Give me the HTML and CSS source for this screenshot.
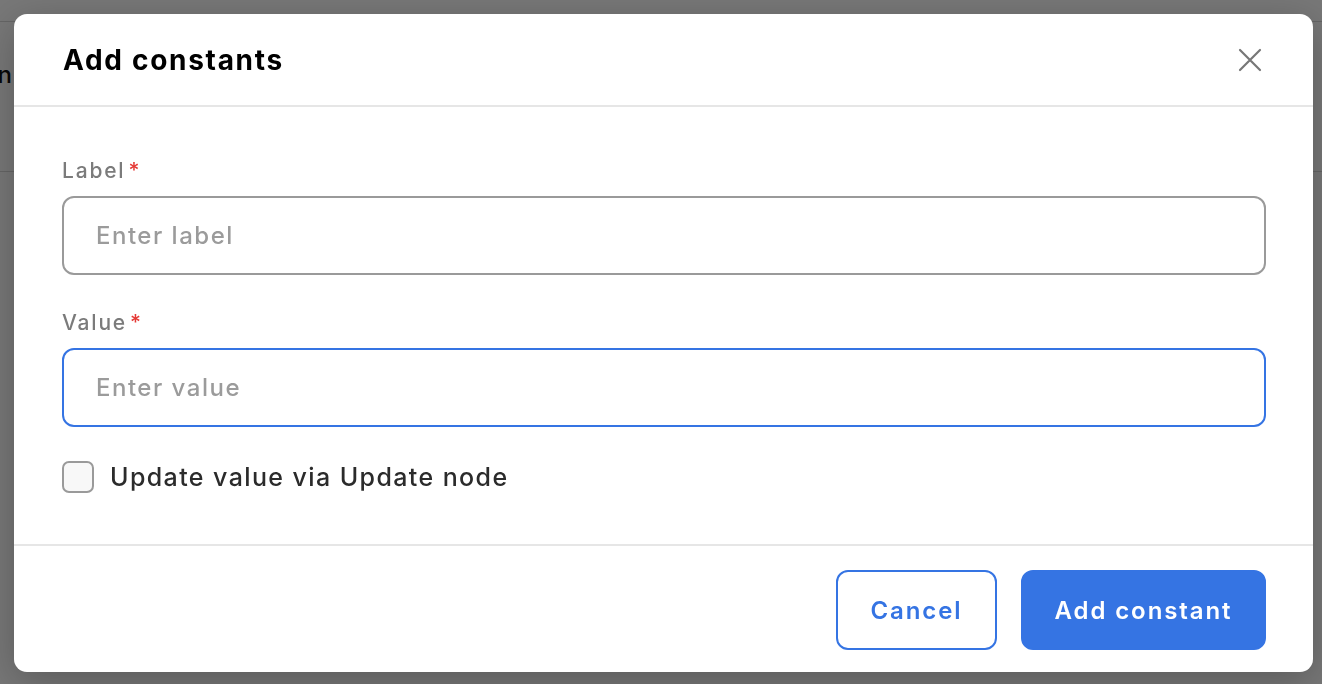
FILE: index.html
```html
<!DOCTYPE html>
<html lang="en">
<head>
<meta charset="utf-8">
<title>Add constants</title>
<link rel="stylesheet" href="styles.css">
</head>
<body>
<div class="page">
  <div class="page-top"></div>
  <div class="page-head"><span class="page-title">Constan</span></div>
</div>
<div class="overlay">
  <div class="modal" role="dialog" aria-labelledby="mtitle">
    <header class="modal-header">
      <h2 id="mtitle" class="modal-title">Add constants</h2>
      <button class="close-btn" aria-label="Close">
        <svg width="24" height="24" viewBox="0 0 24 24" fill="none" stroke="#777" stroke-width="2.2" stroke-linecap="round"><path d="M2 2 L22 22 M22 2 L2 22"/></svg>
      </button>
    </header>
    <div class="modal-body">
      <div class="field">
        <label class="field-label">Label<span class="req">*</span></label>
        <input class="text-input" type="text" placeholder="Enter label">
      </div>
      <div class="field">
        <label class="field-label">Value<span class="req">*</span></label>
        <input class="text-input focused" type="text" placeholder="Enter value">
      </div>
      <label class="check-row">
        <span class="checkbox"></span>
        <span class="check-text">Update value via Update node</span>
      </label>
    </div>
    <footer class="modal-footer">
      <button class="btn btn-outline">Cancel</button>
      <button class="btn btn-primary">Add constant</button>
    </footer>
  </div>
</div>
</body>
</html>
```
FILE: styles.css
```css
* { box-sizing: border-box; }
html, body { margin: 0; padding: 0; }
body {
  width: 1322px;
  height: 684px;
  overflow: hidden;
  font-family: "Inter", "Noto Sans", sans-serif;
  background: #fff;
}
.page { height: 684px; }
.page-top { height: 22px; border-bottom: 1px solid #d8d8d8; }
.page-head {
  height: 150px;
  border-bottom: 1px solid #d8d8d8;
  padding-top: 38px;
}
.page-title {
  display: inline-block;
  margin-left: -84px;
  font-size: 24px;
  font-weight: 500;
  color: #111;
}
.overlay {
  position: fixed;
  inset: 0;
  background: rgba(0, 0, 0, 0.535);
  padding: 14px 9px 12px 14px;
  display: flex;
}
.modal {
  flex: 1;
  background: #fff;
  border-radius: 13px;
  display: flex;
  flex-direction: column;
  box-shadow: 0 10px 40px rgba(0, 0, 0, 0.25);
}
.modal-header {
  height: 93px;
  border-bottom: 2px solid #e6e6e6;
  display: flex;
  align-items: center;
  justify-content: space-between;
  padding: 0 51px 0 49px;
}
.modal-title {
  margin: 0;
  font-size: 28px;
  font-weight: 700;
  color: #000;
  letter-spacing: 1.7px;
}
.close-btn {
  background: none;
  border: 0;
  padding: 0;
  width: 24px;
  height: 24px;
  display: flex;
}
.modal-body {
  flex: 1;
  padding: 50px 47px 0 48px;
  display: flex;
  flex-direction: column;
}
.field { display: flex; flex-direction: column; }
.field + .field { margin-top: 34px; }
.field-label {
  font-size: 21px;
  font-weight: 500;
  color: #7b7b7b;
  line-height: 28px;
  margin-bottom: 11px;
  letter-spacing: 1.8px;
}
.req { color: #e53935; margin-left: 3px; }
.text-input {
  height: 79px;
  border: 2px solid #9a9a9a;
  border-radius: 12px;
  padding: 0 32px;
  font-family: inherit;
  font-size: 24px;
  font-weight: 500;
  color: #333;
  letter-spacing: 1.5px;
  outline: none;
}
.text-input::placeholder { color: #9b9b9b; }
.text-input.focused { border-color: #3574e3; }
.check-row {
  margin-top: 34px;
  display: flex;
  align-items: center;
  gap: 16px;
}
.checkbox {
  width: 32px;
  height: 32px;
  border: 2px solid #9a9a9a;
  border-radius: 7px;
  background: #f8f8f8;
}
.check-text {
  font-size: 25px;
  font-weight: 500;
  color: #2b2b2b;
  letter-spacing: 1.4px;
}
.modal-footer {
  height: 128px;
  border-top: 2px solid #e6e6e6;
  display: flex;
  justify-content: flex-end;
  align-items: flex-start;
  gap: 24px;
  padding: 24px 47px 0 0;
}
.btn {
  height: 80px;
  border-radius: 12px;
  font-family: inherit;
  font-size: 24px;
  font-weight: 600;
  letter-spacing: 1.9px;
  padding: 0;
}
.btn-outline {
  width: 161px;
  background: #fff;
  border: 2px solid #3574e3;
  color: #3574e3;
}
.btn-primary {
  width: 245px;
  background: #3574e3;
  border: 2px solid #3574e3;
  color: #fff;
}
```
